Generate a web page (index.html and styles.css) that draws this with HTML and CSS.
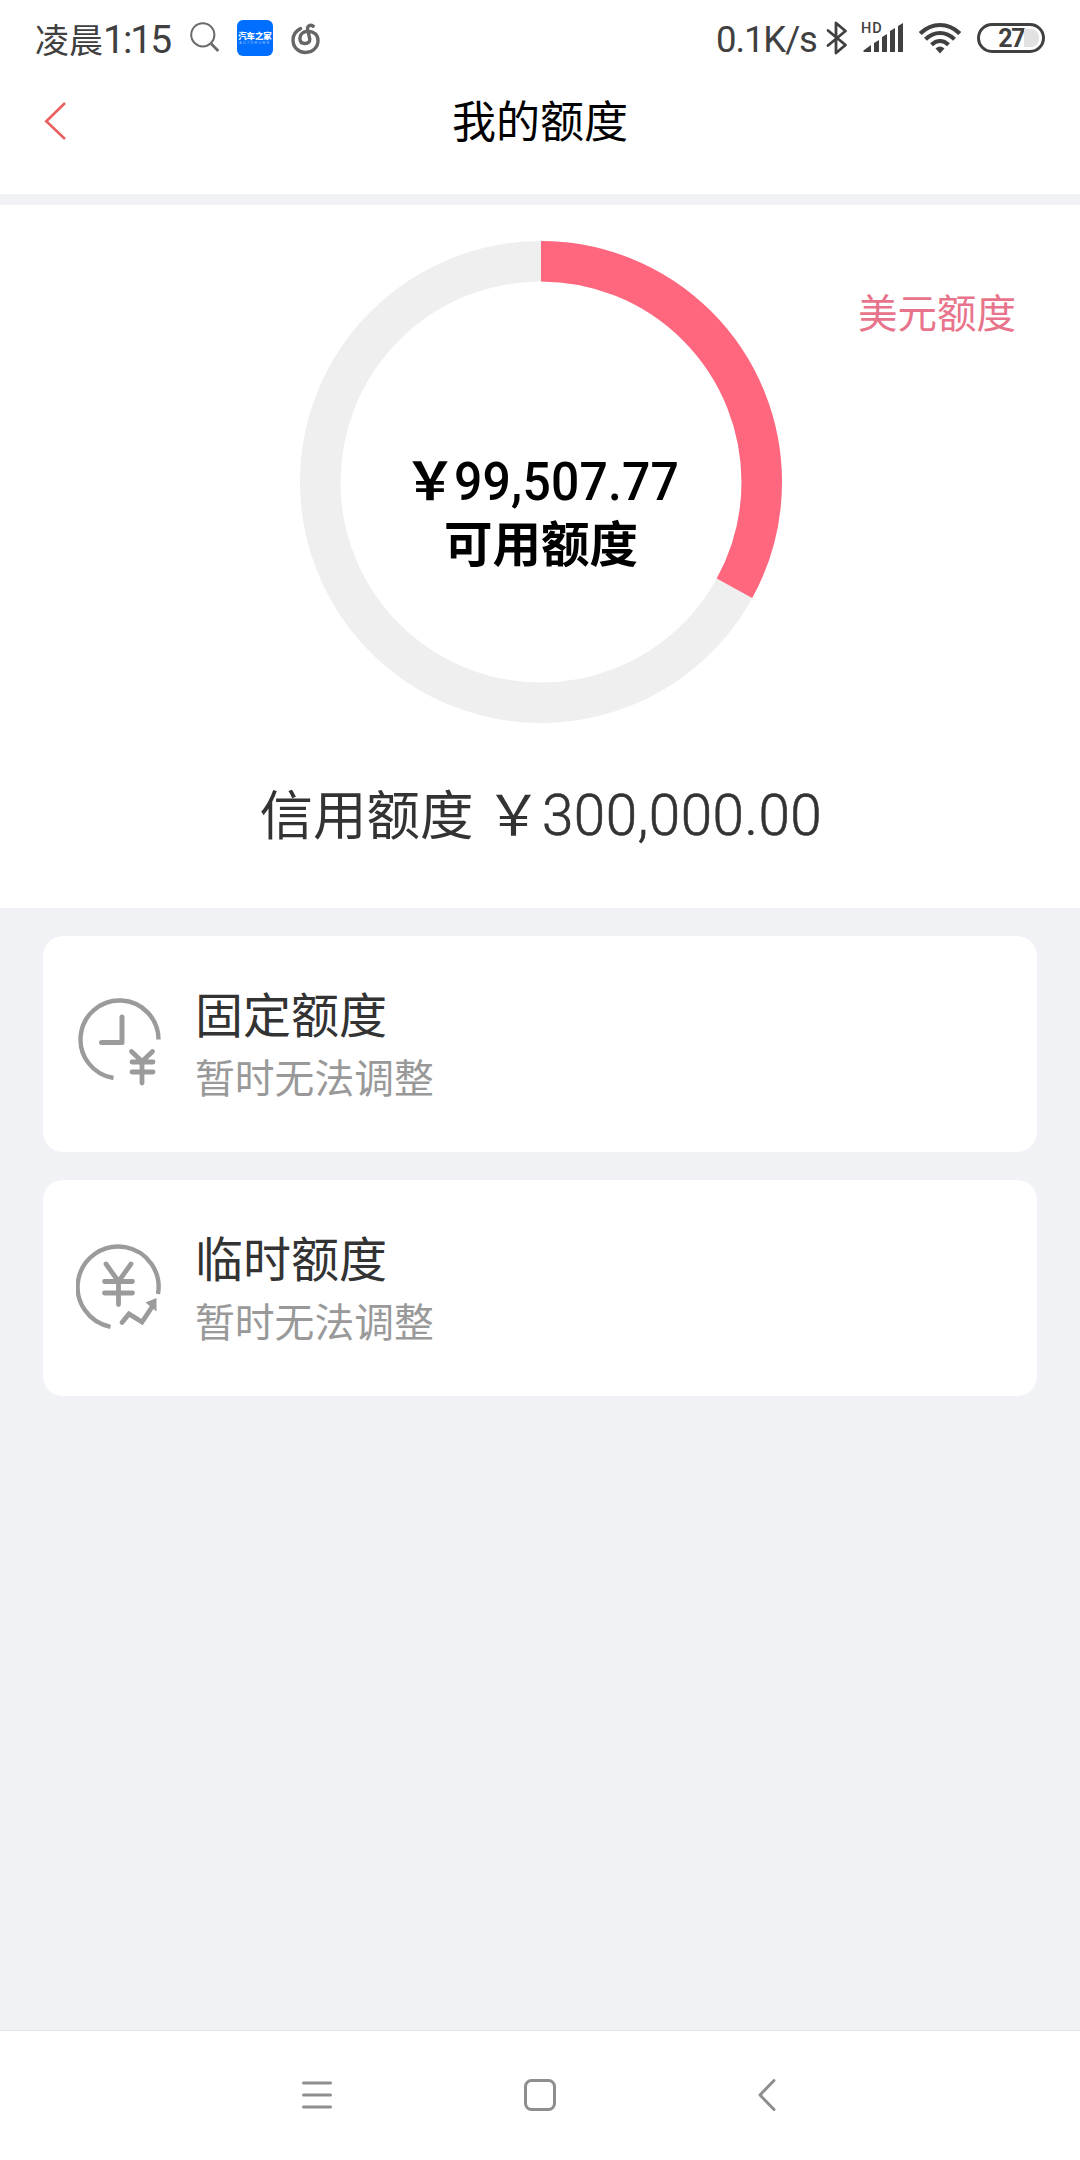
FILE: index.html
```html
<!DOCTYPE html>
<html lang="zh-CN">
<head>
<meta charset="utf-8">
<title>我的额度</title>
<link rel="stylesheet" href="styles.css">
</head>
<body>
<div class="screen">
  <div class="status">
    <div class="status-left">
      <span class="clock">凌晨<span class="clock-num">1:15</span></span>
      <svg class="ic-search" width="30" height="32" viewBox="0 0 30 32" fill="none" stroke="#6b6b6b"><circle cx="12.8" cy="12.8" r="11.6" stroke-width="2"/><path d="M21 21.5L28.3 29" stroke-width="2.8"/></svg>
      <span class="app-badge"><b>汽车之家</b><i>AUTOHOME</i></span>
      <svg class="ic-music" width="30" height="32" viewBox="0 0 30 32" fill="none" stroke="#666" stroke-width="3.4" stroke-linecap="round"><path d="M9.500 5.600C5 7.800 2 12 2 17C2 24.500 7.600 29.500 14.500 29.500C21.500 29.500 27 24.500 27 17.500C27 11.500 22.500 8.300 16.500 8.300C12 8.300 8.900 11.500 8.900 15.500C8.900 18.800 11 20.500 14 20.500C17 20.500 19.200 18.800 18.700 15.500L16.500 6C16.200 3 19 1.200 22.200 3.200"/></svg>
    </div>
    <div class="status-right">
      <span class="speed">0.1K/s</span>
      <svg class="ic-bt" width="22" height="36" viewBox="0 0 22 36" fill="none" stroke="#404040" stroke-width="2.800" stroke-linejoin="round" stroke-linecap="round"><path d="M2 10.500L19.500 25L10 33V3L19.500 11L2 25.500"/></svg>
      <svg class="ic-signal" width="44" height="34" viewBox="0 0 44 34" fill="#404040"><text x="0" y="12" class="hd">HD</text><path d="M2.500 31V29.500L10 24V31zM13 31V22L18 19V31zM21 31V16L26 13V31zM29 31V10L34 7V31zM37 31V5L42 2V31z"/></svg>
      <svg class="ic-wifi" width="42" height="32" viewBox="0 0 42 32" fill="none" stroke="#404040" stroke-width="4.200"><path d="M1.200 11.500Q10 3 21 3T40.800 11.500"/><path d="M6.500 17.300Q13 11 21 11T35.500 17.300"/><path d="M12.500 22.800Q16.500 19 21 19T29.500 22.800"/><path d="M16.500 26.500Q21 22.500 25.500 26.500L21 31.500z" fill="#404040" stroke="none"/></svg>
      <span class="battery"><span class="battery-num">27</span><span class="battery-rest"></span></span>
    </div>
  </div>
  <header class="header">
    <svg class="back" width="22" height="40" viewBox="0 0 22 40" fill="none" stroke="#ea5f5f" stroke-width="2.600"><path d="M21 2L2.300 20.200L21 38"/></svg>
    <h1 class="title">我的额度</h1>
  </header>
  <section class="quota">
    <a class="usd">美元额度</a>
    <div class="ring">
      <svg width="482" height="482" viewBox="0 0 482 482" fill="none" stroke-width="40.500"><circle cx="241" cy="241" r="220.750" stroke="#efefef"/><circle cx="241" cy="241" r="220.750" stroke="#ff677f" pathLength="100" stroke-dasharray="33 67" transform="rotate(-90 241 241)"/></svg>
      <div class="ring-text">
        <div class="avail"><span class="yen">￥</span><span class="num">99,507.77</span></div>
        <div class="avail-label">可用额度</div>
      </div>
    </div>
    <div class="credit"><span class="credit-label">信用额度</span><span class="yen">￥</span><span class="num">300,000.00</span></div>
  </section>
  <main class="cards">
    <div class="card">
      <svg class="card-icon" width="86" height="90" viewBox="0 0 86 90" fill="none" stroke="#9b9b9b" stroke-linecap="round" stroke-linejoin="round"><path d="M82.500 42.500A39 39 0 1 0 37.500 81" stroke-width="4.400" stroke-linecap="butt"/><path d="M46 20V45.500H25.500" stroke-width="5"/><path d="M55.500 54.500L66 64.500L76.500 54.500M56 65H77M56 75H77M66 65V86" stroke-width="4.800"/></svg>
      <div><h2 class="card-title">固定额度</h2><p class="card-sub">暂时无法调整</p></div>
    </div>
    <div class="card">
      <svg class="card-icon" width="86" height="90" viewBox="0 0 86 90" fill="none" stroke="#9b9b9b" stroke-linecap="round" stroke-linejoin="round"><g transform="translate(0 2.500)"><path d="M82 50.500A40.500 40.500 0 1 0 34.500 83.300" stroke-width="4.400" stroke-linecap="butt"/><path d="M30 20.500L42.500 38L55 20.500M28.500 38H56.500M28.500 49.500H56.500M42.500 38V61" stroke-width="4.800"/><path d="M46 79L53 70.500L66 78.500L77 62" stroke-width="4.800" stroke-linejoin="miter"/><path d="M69.500 59L80.500 54.500V68z" fill="#9b9b9b" stroke="none"/></g></svg>
      <div><h2 class="card-title">临时额度</h2><p class="card-sub">暂时无法调整</p></div>
    </div>
  </main>
  <nav class="nav">
    <svg width="32" height="34" viewBox="0 0 32 34" fill="none" stroke="#8e8e8e" stroke-width="3" stroke-linecap="round"><path d="M2.500 5H29.500M2.500 17H29.500M2.500 29H29.500"/></svg>
    <svg width="32" height="34" viewBox="0 0 32 34" fill="none" stroke="#8e8e8e" stroke-width="3"><rect x="1.500" y="2.500" width="29" height="29" rx="6"/></svg>
    <svg width="32" height="34" viewBox="0 0 32 34" fill="none" stroke="#8e8e8e" stroke-width="3" stroke-linecap="round" stroke-linejoin="round"><path d="M27 2.500L13 17L27 31.500"/></svg>
  </nav>
</div>
</body>
</html>
```
FILE: styles.css
```css
* { box-sizing: border-box; margin: 0; padding: 0; }
body { background: #fff; font-family: "Noto Sans CJK SC", sans-serif; color: #333; }
svg { display: block; flex: none; }
.screen { width: 1080px; height: 2160px; display: flex; flex-direction: column; overflow: hidden; }

.status { height: 76px; display: flex; justify-content: space-between; align-items: flex-start; padding: 0 35px; color: #404040; }
.status-left, .status-right { display: flex; align-items: flex-start; white-space: nowrap; }
.clock { width: 155px; padding-top: 13px; font-size: 34px; line-height: 52px; height: 65px; }
.clock-num { font-family: Roboto, sans-serif; font-size: 39px; line-height: 40px; letter-spacing: -2px; }
.ic-search { margin-top: 22px; }
.app-badge { width: 36px; height: 36px; margin: 20px 18px 0 17px; border-radius: 6px; background: #006eff; color: #fff; display: flex; flex-direction: column; align-items: center; }
.app-badge b { font-size: 8.4px; font-weight: 900; line-height: 12px; margin-top: 9px; }
.app-badge i { font: 3.5px/4px "Liberation Sans", sans-serif; letter-spacing: 1.4px; opacity: .6; }
.ic-music { margin-top: 23px; }
.speed { font-family: Roboto, sans-serif; font-size: 36.5px; line-height: 40px; padding-top: 20px; width: 110px; letter-spacing: -1.1px; }
.ic-bt { margin-top: 20px; }
.ic-signal { margin: 21px 0 0 13px; }
.hd { font: 500 14.5px Roboto, sans-serif; letter-spacing: 1px; }
.ic-wifi { margin: 22px 0 0 14px; }
.battery { width: 68px; height: 30px; margin: 23px 0 0 16px; border: 3px solid #404040; border-radius: 15px; display: flex; align-items: center; justify-content: flex-end; padding-right: 3px; }
.battery-num { font: 700 25px/24px Roboto, sans-serif; letter-spacing: -1.5px; padding-top: 1px; }
.battery-rest { width: 15px; height: 18px; background: #e2e2e2; border-radius: 0 8px 8px 0; }

.header { height: 129px; border-bottom: 11px solid #f0f2f5; display: grid; grid-template-columns: 67px 1fr 67px; padding-top: 13px; }
.back { margin: 12px 0 0 44px; }
.title { font-size: 44px; font-weight: 400; line-height: 60px; color: #000; text-align: center; }

.quota { height: 703px; position: relative; display: flex; flex-direction: column; align-items: center; padding: 36px 0 0 2px; }
.usd { position: absolute; right: 64px; top: 77px; font-size: 39.5px; line-height: 58px; color: #e8748b; }
.ring { display: grid; }
.ring > * { grid-area: 1 / 1; }
.ring-text { display: flex; flex-direction: column; align-items: center; padding-top: 204px; color: #000; }
.avail { display: flex; align-items: baseline; font-weight: 500; line-height: 66px; height: 66px; width: 274px; white-space: nowrap; }
.avail .yen { font-size: 52px; font-weight: 700; width: 50px; }
.avail .num { font-family: Roboto, sans-serif; font-size: 54.5px; letter-spacing: .2px; transform: scaleX(.915); transform-origin: 0 50%; }
.avail-label { font-size: 48.5px; line-height: 64px; font-weight: 700; margin-top: -2px; }
.credit { display: flex; align-items: baseline; width: 563px; margin-top: 50px; font-size: 53.5px; line-height: 76px; white-space: nowrap; }
.credit .yen { font-size: 56px; margin-left: 12px; }
.credit .num { font-family: Roboto, sans-serif; font-weight: 300; -webkit-text-stroke: .6px #333; font-size: 57.5px; letter-spacing: .5px; transform: scaleX(.983); transform-origin: 0 50%; }

.cards { flex: 1; background: #f0f2f6; padding: 28px 43px; display: flex; flex-direction: column; gap: 28px; border-bottom: 1px solid #e4e5e8; }
.card { height: 216px; background: #fff; border-radius: 20px; display: flex; align-items: flex-start; padding-top: 44px; }
.card-icon { margin: 17px 33px 0 33px; }
.card-title { font-size: 48px; font-weight: 400; line-height: 64px; }
.card-sub { font-size: 39.8px; line-height: 56px; margin-top: 4px; color: #999; }

.nav { height: 129px; display: flex; justify-content: center; gap: 191px; padding-top: 47px; background: #fff; }
```
